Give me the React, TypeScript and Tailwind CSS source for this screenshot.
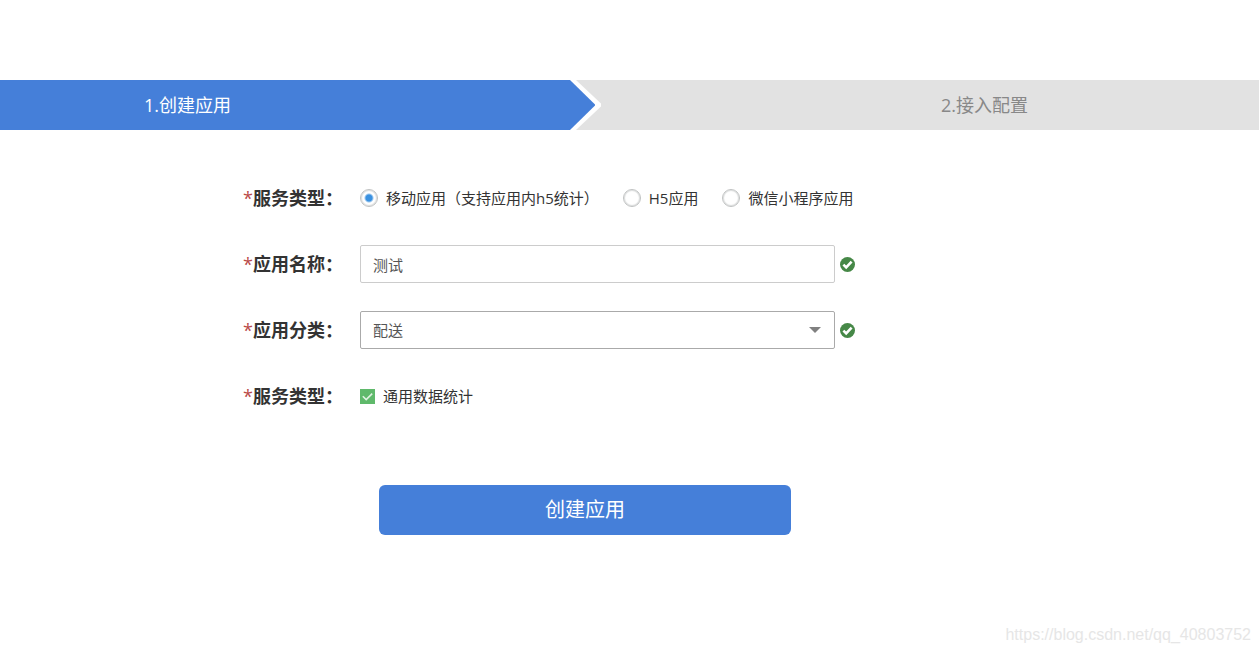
import { useState } from "react";
import type { ReactNode } from "react";

const appTypes = [
    { value: "mobile", label: "移动应用（支持应用内h5统计）" },
    { value: "h5", label: "H5应用" },
    { value: "mini", label: "微信小程序应用" },
];

const categories = ["配送", "购物", "教育", "游戏"];

function FormRow({ label, htmlFor, children }: { label: string; htmlFor?: string; children: ReactNode }) {
    return (
        <div className="flex h-[38px] items-center">
            <label htmlFor={htmlFor} className="w-[117px] shrink-0 text-lg leading-6 font-bold text-[#333]">
                <span className="font-medium text-[#b94a48]">*</span>
                {label}：
            </label>
            {children}
        </div>
    );
}

function ValidMark() {
    return (
        <svg className="ml-1 shrink-0" width="17" height="17" viewBox="0 0 17 17" aria-hidden="true">
            <circle cx="8.5" cy="8.5" r="7.5" fill="#468847" />
            <path d="M4.4 8.6l2.8 2.8 5.4-5.8" fill="none" stroke="#fff" strokeWidth="2.6" />
        </svg>
    );
}

export default function App() {
    const [appType, setAppType] = useState("mobile");
    const [name, setName] = useState("测试");
    const [category, setCategory] = useState("配送");
    const [general, setGeneral] = useState(true);

    return (
        <div className="bg-white pt-20 font-['Open_Sans','Noto_Sans_CJK_SC',sans-serif] text-[15px] text-[#333]">
            {/* steps */}
            <div className="grid grid-cols-[570fr_31px_658fr] text-lg">
                <div className="flex h-[50px] items-center bg-[#457fd9] pl-36 text-white">1.创建应用</div>
                <svg className="h-[50px] w-full" viewBox="0 0 31 50" preserveAspectRatio="none" aria-hidden="true">
                    <path d="M0 0H31V50H0z" fill="#e2e2e2" />
                    <path d="M0 0H6L31 23.5V26.5L6 50H0z" fill="#fff" />
                    <path d="M0 0L25 24.5V25.5L0 50z" fill="#457fd9" />
                </svg>
                <div className="flex h-[50px] items-center bg-[#e2e2e2] pl-[340px] text-[#888]">2.接入配置</div>
            </div>

            <form className="pt-[49px] pl-[243px]" onSubmit={(e) => e.preventDefault()}>
                <div className="flex flex-col gap-7">
                    <FormRow label="服务类型">
                        <div className="flex gap-6">
                            {appTypes.map((type) => (
                                <label key={type.value} className="flex items-center gap-2">
                                    <input
                                        type="radio"
                                        name="appType"
                                        value={type.value}
                                        checked={appType === type.value}
                                        onChange={() => setAppType(type.value)}
                                        className="size-[18px] appearance-none rounded-full border border-[#c0c2c2] bg-white inset-shadow-[0_0_1px_1px_#dcdede] checked:bg-[radial-gradient(circle,#3a91e0_3px,#fff_5px)]"
                                    />
                                    {type.label}
                                </label>
                            ))}
                        </div>
                    </FormRow>

                    <FormRow label="应用名称" htmlFor="name">
                        <input
                            id="name"
                            type="text"
                            value={name}
                            onChange={(e) => setName(e.target.value)}
                            className="h-[38px] w-[475px] rounded-xs border border-[#ccc] px-3 text-[#555] outline-none"
                        />
                        <ValidMark />
                    </FormRow>

                    <FormRow label="应用分类" htmlFor="category">
                        <div className="relative">
                            <select
                                id="category"
                                value={category}
                                onChange={(e) => setCategory(e.target.value)}
                                className="h-[38px] w-[475px] appearance-none rounded-xs border border-[#aaa] bg-white px-3 text-[#555] outline-none"
                            >
                                {categories.map((item) => (
                                    <option key={item}>{item}</option>
                                ))}
                            </select>
                            <svg className="pointer-events-none absolute top-4 right-3.5" width="12" height="6" viewBox="0 0 12 6" aria-hidden="true">
                                <path d="M0 0h12L6 6z" fill="#808080" />
                            </svg>
                        </div>
                        <ValidMark />
                    </FormRow>

                    <FormRow label="服务类型">
                        <label className="flex items-center gap-2">
                            <span className="relative flex">
                                <input
                                    type="checkbox"
                                    checked={general}
                                    onChange={(e) => setGeneral(e.target.checked)}
                                    className="peer size-[15px] appearance-none border border-[#5fb96b] checked:bg-[#5fb96b]"
                                />
                                <svg className="pointer-events-none absolute inset-0 hidden peer-checked:block" width="15" height="15" viewBox="0 0 15 15" aria-hidden="true">
                                    <path d="M2.8 7.2l3.4 3.4 6-6" fill="none" stroke="#dff2e1" strokeWidth="1.6" />
                                </svg>
                            </span>
                            通用数据统计
                        </label>
                    </FormRow>
                </div>

                <button type="submit" className="mt-[70px] ml-[136px] h-[50px] w-[412px] rounded-md bg-[#457fd9] text-xl text-white">
                    创建应用
                </button>
            </form>

            <p className="mt-[88px] pr-2 text-right font-['Liberation_Sans',sans-serif] text-base text-[#e6e6e6]">
                https://blog.csdn.net/qq_40803752
            </p>
        </div>
    );
}
